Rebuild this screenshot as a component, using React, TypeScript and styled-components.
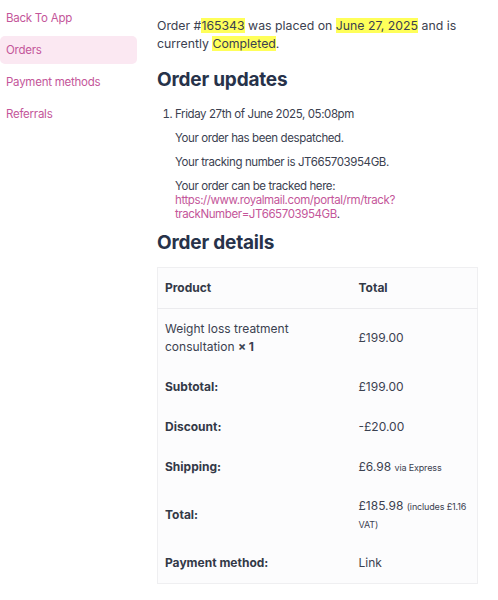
import styled, { createGlobalStyle } from 'styled-components';

const GlobalStyle = createGlobalStyle`
  body {
    margin: 0;
    background: #ffffff;
    font-family: Inter, 'Noto Sans', sans-serif;
    color: #3b4150;
  }
`;

const Page = styled.div`
  display: flex;
  align-items: flex-start;
  gap: 20px;
  padding-top: 4px;
`;

const Sidebar = styled.nav`
  display: flex;
  flex-direction: column;
  gap: 4px;
  width: 137px;
  flex-shrink: 0;
`;

const NavItem = styled.a<{ $active?: boolean }>`
  display: block;
  padding: 6px 6px;
  border-radius: 5px;
  font-size: 11.5px;
  letter-spacing: -0.25px;
  line-height: 16px;
  color: #c4569a;
  text-decoration: none;
  background: ${(p) => (p.$active ? '#fbe8f2' : 'transparent')};
`;

const Main = styled.main`
  width: 321px;
  padding-top: 13px;
`;

const Intro = styled.p`
  margin: 0;
  font-size: 12.3px;
  line-height: 17.5px;
`;

const Mark = styled.mark`
  background: #ffff5a;
  color: inherit;
`;

const Heading = styled.h2<{ $gapAbove: number; $gapBelow: number }>`
  margin: ${(p) => p.$gapAbove}px 0 ${(p) => p.$gapBelow}px;
  font-size: 19px;
  letter-spacing: -0.2px;
  line-height: 26px;
  font-weight: 700;
  color: #27324a;
`;

const Updates = styled.ol`
  margin: 0;
  padding-left: 18px;
  font-size: 11.5px;
  letter-spacing: -0.4px;
  line-height: 14px;
`;

const UpdateItem = styled.li``;

const Note = styled.p`
  margin: 10px 0 0;
`;

const Link = styled.a`
  color: #c4569a;
  text-decoration: none;
`;

const Table = styled.table`
  width: 100%;
  table-layout: fixed;
  border-collapse: collapse;
  background: #fcfcfd;
  border: 1px solid #efeff1;
  font-size: 12px;
  line-height: 18px;
`;

const HeadCell = styled.th<{ $width?: number }>`
  box-sizing: border-box;
  width: ${(p) => (p.$width ? `${p.$width}px` : 'auto')};
  text-align: left;
  font-weight: 700;
  padding: 11px 7px;
  color: #333947;
  border-bottom: 1px solid #ebebee;
`;

const LabelCell = styled.th`
  text-align: left;
  font-weight: 700;
  padding: 11px 7px;
  color: #333947;
`;

const Cell = styled.td<{ $padY?: number }>`
  padding: ${(p) => p.$padY ?? 11}px 7px;
  color: #3b4150;
  vertical-align: middle;
`;

const Qty = styled.strong`
  line-height: 1;
`;

const Small = styled.small`
  font-size: 9px;
  letter-spacing: -0.15px;
  line-height: 1;
`;

export default function App() {
  return (
    <>
      <GlobalStyle />
      <Page>
        <Sidebar>
          <NavItem href="#">Back To App</NavItem>
          <NavItem href="#" $active>
            Orders
          </NavItem>
          <NavItem href="#">Payment methods</NavItem>
          <NavItem href="#">Referrals</NavItem>
        </Sidebar>
        <Main>
          <Intro>
            Order #<Mark>165343</Mark> was placed on <Mark>June 27, 2025</Mark>{' '}
            and is currently <Mark>Completed</Mark>.
          </Intro>
          <Heading $gapAbove={15} $gapBelow={14}>
            Order updates
          </Heading>
          <Updates>
            <UpdateItem>
              Friday 27th of June 2025, 05:08pm
              <Note>Your order has been despatched.</Note>
              <Note>Your tracking number is JT665703954GB.</Note>
              <Note>
                Your order can be tracked here:
                <br />
                <Link href="#">
                  https://www.royalmail.com/portal/rm/track?
                  <br />
                  trackNumber=JT665703954GB
                </Link>
                .
              </Note>
            </UpdateItem>
          </Updates>
          <Heading $gapAbove={9} $gapBelow={11}>
            Order details
          </Heading>
          <Table>
            <thead>
              <tr>
                <HeadCell $width={194}>Product</HeadCell>
                <HeadCell>Total</HeadCell>
              </tr>
            </thead>
            <tbody>
              <tr>
                <Cell>
                  Weight loss treatment consultation <Qty>× 1</Qty>
                </Cell>
                <Cell>£199.00</Cell>
              </tr>
              <tr>
                <LabelCell>Subtotal:</LabelCell>
                <Cell>£199.00</Cell>
              </tr>
              <tr>
                <LabelCell>Discount:</LabelCell>
                <Cell>-£20.00</Cell>
              </tr>
              <tr>
                <LabelCell>Shipping:</LabelCell>
                <Cell>
                  £6.98 <Small>via Express</Small>
                </Cell>
              </tr>
              <tr>
                <LabelCell>Total:</LabelCell>
                <Cell $padY={10}>
                  £185.98 <Small>(includes £1.16 VAT)</Small>
                </Cell>
              </tr>
              <tr>
                <LabelCell>Payment method:</LabelCell>
                <Cell>Link</Cell>
              </tr>
            </tbody>
          </Table>
        </Main>
      </Page>
    </>
  );
}
